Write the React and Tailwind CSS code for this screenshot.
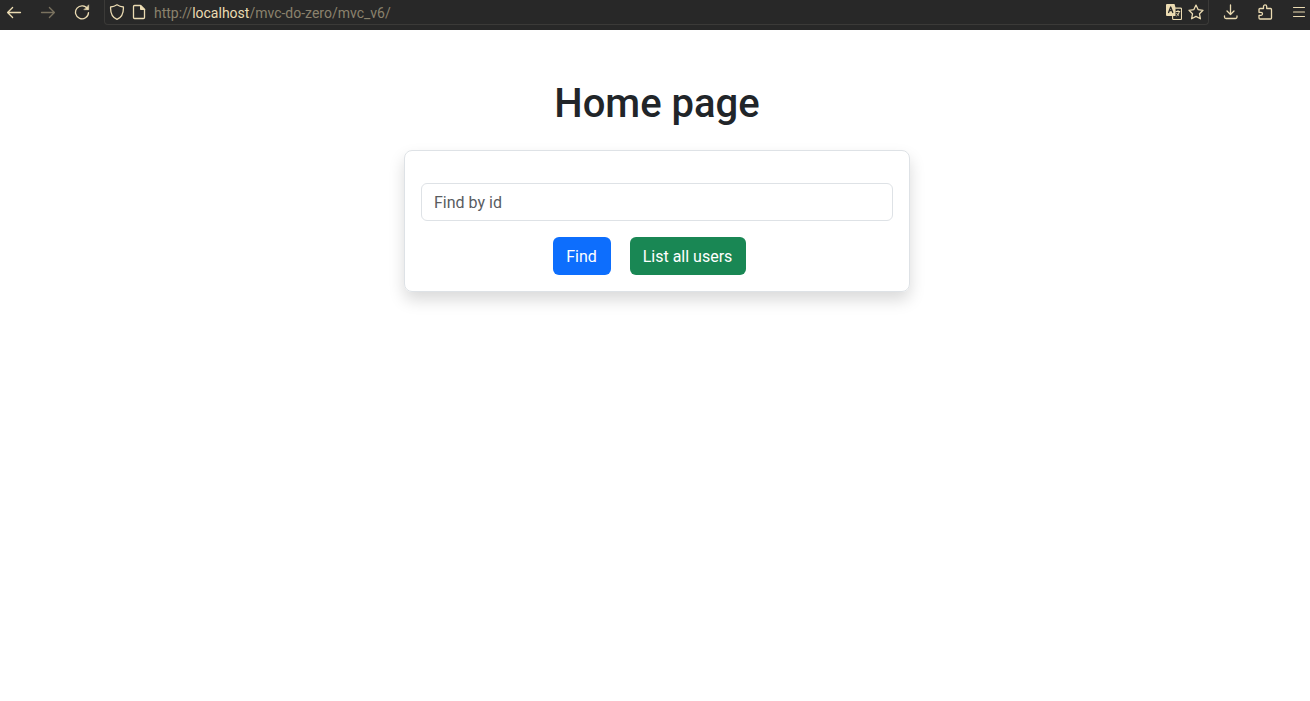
import React from "react";

function Icon({ children, label, className = "" }) {
  return (
    <svg
      viewBox="0 0 16 16"
      role="img"
      aria-label={label}
      className={`size-4 shrink-0 ${className}`}
      fill="none"
      stroke="currentColor"
      strokeWidth="1.3"
      strokeLinecap="round"
      strokeLinejoin="round"
    >
      {children}
    </svg>
  );
}

function Toolbar() {
  return (
    <header className="flex h-[30px] items-start bg-[#282828] text-[#ebdbb2]">
      <nav className="flex h-6 items-center gap-[18px] pl-1.5">
        <button type="button" aria-label="Back" className="block">
          <Icon>
            <path d="M14.5 8.5H1.8M6.6 3.5l-5 5 5 5" />
          </Icon>
        </button>
        <button type="button" aria-label="Forward" className="block text-[#7a725f]">
          <Icon>
            <path d="M1.5 8.5h12.7M9.4 3.5l5 5-5 5" />
          </Icon>
        </button>
        <button type="button" aria-label="Reload" className="block">
          <Icon>
            <path d="M13.6 5A6.5 6.5 0 1 0 14.5 8.6" />
            <path d="M14.7 1.2v4.5h-4.5z" fill="currentColor" strokeWidth="0.6" />
          </Icon>
        </button>
      </nav>
      <div className="ml-3.5 flex h-[25px] flex-1 items-center rounded-b border border-t-0 border-[#3b3a38] px-1">
        <Icon label="Protection">
          <path d="M8 .8c2 1.4 4.1 2 6.4 2.2.3 6-1.7 10.3-6.4 12.4C3.3 13.3 1.3 9 1.6 3 3.900 2.8 6 2.2 8 .8z" />
        </Icon>
        <Icon label="Site information" className="ml-1.5">
          <path d="M3.500 1.500h6l4 4v8a1 1 0 0 1-1 1h-9a1 1 0 0 1-1-1v-11a1 1 0 0 1 1-1z" />
          <path d="M9.500 1.500v4h4z" fill="currentColor" strokeWidth="1" />
        </Icon>
        <a
          href="http://localhost/mvc-do-zero/mvc_v6/"
          className="ml-[7px] flex-1 whitespace-nowrap pt-px font-[Roboto,sans-serif] text-sm leading-6 text-[#8b826d]"
        >
          http://<span className="text-[#ebdbb2]">localhost</span>/mvc-do-zero/mvc_v6/
        </a>
        <div className="flex items-center gap-1.5">
          <button type="button" aria-label="Translate page" className="block">
            <Icon>
              <path d="M1 0h7.500l1 3.500v8.500H1a1 1 0 0 1-1-1V1a1 1 0 0 1 1-1z" fill="currentColor" stroke="none" />
              <path d="M2.600 8.500 4.700 3 6.800 8.500M3.400 6.600H6" stroke="#282828" strokeWidth="1.300" />
              <path d="M9.500 4.100h5a1 1 0 0 1 1 1v9.400a1 1 0 0 1-1 1H7.600a1 1 0 0 1-1-1v-2.500" strokeWidth="1.100" />
              <path d="M10 7.500h3.800M12 6.500v1M13.200 7.800c-.3 1.900-1.100 3.100-2.400 4M10.800 9.300c.4 1 1 1.600 1.800 2" strokeWidth="1" />
            </Icon>
          </button>
          <button type="button" aria-label="Bookmark this page" className="block">
            <Icon>
              <path d="m8 1.100 2.100 4.500 4.900.7-3.500 3.500.9 5L8 12.400l-4.400 2.400.9-5L1 6.300l4.900-.7z" strokeLinejoin="round" />
            </Icon>
          </button>
        </div>
      </div>
      <div className="flex h-6 items-center gap-[18px] pl-3.5 pr-[3px]">
        <button type="button" aria-label="Downloads" className="block">
          <Icon>
            <path d="M7.500 1v9.500M4 7l3.500 3.500L11 7M1.500 12v1a1.500 1.500 0 0 0 1.500 1.500h9.500A1.500 1.500 0 0 0 14 13v-1" />
          </Icon>
        </button>
        <button type="button" aria-label="Extensions" className="block">
          <Icon>
            <path d="M3 4.500h3.500V2.500a1.600 1.600 0 0 1 3.200 0v2h3.800a1 1 0 0 1 1 1v8.500a1 1 0 0 1-1 1H3a1 1 0 0 1-1-1v-2.700h2a1.500 1.500 0 0 0 0-3H2V5.500a1 1 0 0 1 1-1z" />
          </Icon>
        </button>
        <button type="button" aria-label="Open application menu" className="block">
          <Icon>
            <path d="M2.500 3.500h11M2.500 8h11M2.500 12.500h11" strokeWidth="1.100" />
          </Icon>
        </button>
      </div>
    </header>
  );
}

export default function App() {
  return (
    <div className="min-h-screen bg-white font-[Roboto,sans-serif] text-base text-[#212529]">
      <Toolbar />
      <main className="flex flex-col items-center pl-1 pt-12">
        <h1 className="text-[40px] font-medium leading-[52px]">Home page</h1>
        <form
          onSubmit={(event) => event.preventDefault()}
          className="mt-5 w-full max-w-[506px] rounded-lg border border-[#dee2e6] px-4 pb-4 pt-8 shadow-[0_8px_16px_rgba(0,0,0,0.15)]"
        >
          <input
            type="text"
            aria-label="Find by id"
            placeholder="Find by id"
            className="block h-[38px] w-full rounded-md border border-[#dee2e6] px-3 placeholder:text-[#595c5f]"
          />
          <div className="mt-4 flex justify-center gap-[19px] pr-4">
            <button type="submit" className="h-[38px] min-w-[58px] rounded-md bg-[#0d6efd] px-3 pt-0.5 text-white">
              Find
            </button>
            <button type="button" className="h-[38px] min-w-[116px] rounded-md bg-[#198754] px-3 pt-0.5 text-white">
              List all users
            </button>
          </div>
        </form>
      </main>
    </div>
  );
}
